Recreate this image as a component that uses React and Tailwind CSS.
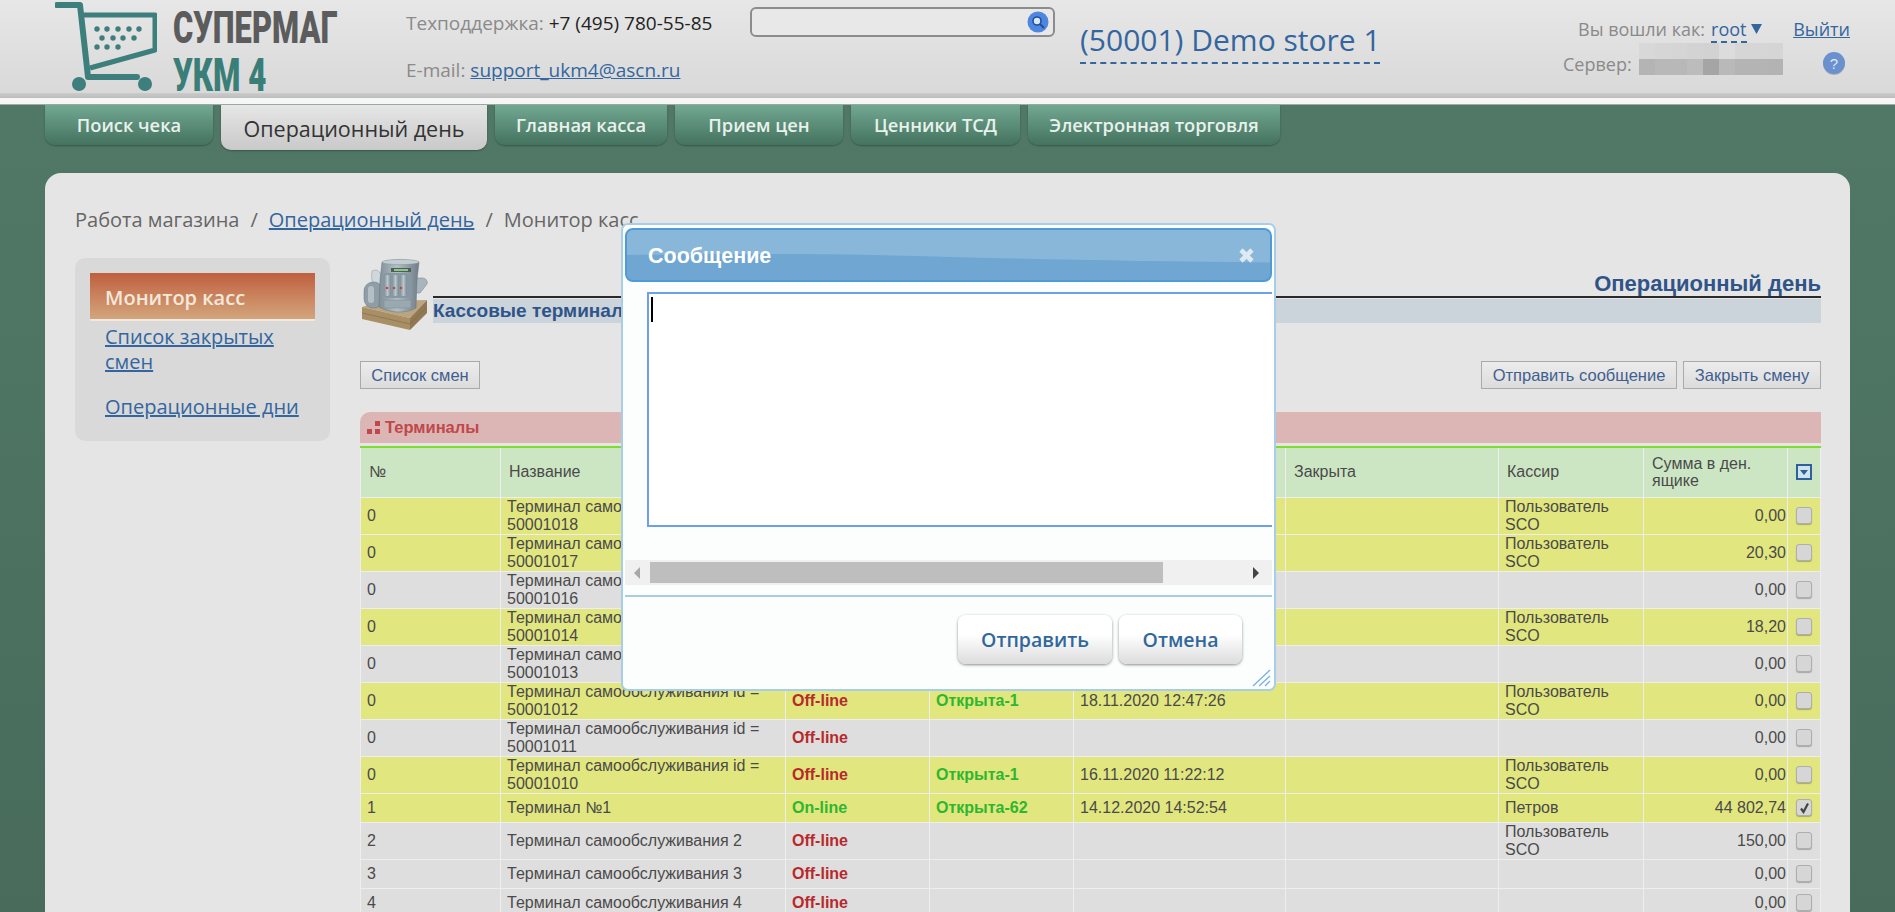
const tabs = [
    { label: "Поиск чека", width: "w-[168px]" },
    { label: "Операционный день", width: "w-[266px]", active: true },
    { label: "Главная касса", width: "w-[172px]" },
    { label: "Прием цен", width: "w-[168px]" },
    { label: "Ценники ТСД", width: "w-[169px]" },
    { label: "Электронная торговля", width: "w-[252px]" },
];

const SCO = "Терминал самообслуживания id =";

const rows = [
    { no: "0", name: SCO, id: "50001018", yellow: true, cashier: true, sum: "0,00" },
    { no: "0", name: SCO, id: "50001017", yellow: true, cashier: true, sum: "20,30" },
    { no: "0", name: SCO, id: "50001016", sum: "0,00" },
    { no: "0", name: SCO, id: "50001014", yellow: true, cashier: true, sum: "18,20" },
    { no: "0", name: SCO, id: "50001013", sum: "0,00" },
    { no: "0", name: SCO, id: "50001012", yellow: true, status: "Off-line", shift: "Открыта-1", opened: "18.11.2020 12:47:26", cashier: true, sum: "0,00" },
    { no: "0", name: SCO, id: "50001011", status: "Off-line", sum: "0,00" },
    { no: "0", name: SCO, id: "50001010", yellow: true, status: "Off-line", shift: "Открыта-1", opened: "16.11.2020 11:22:12", cashier: true, sum: "0,00" },
    { no: "1", name: "Терминал №1", yellow: true, short: true, status: "On-line", shift: "Открыта-62", opened: "14.12.2020 14:52:54", cashierName: "Петров", sum: "44 802,74", checked: true },
    { no: "2", name: "Терминал самообслуживания 2", status: "Off-line", cashier: true, sum: "150,00" },
    { no: "3", name: "Терминал самообслуживания 3", short: true, status: "Off-line", sum: "0,00" },
    { no: "4", name: "Терминал самообслуживания 4", short: true, status: "Off-line", sum: "0,00" },
];

const blurTop = ["bg-[#d8d8d8]", "bg-[#d6d6d6]", "bg-[#d5d5d5]", "bg-[#d3d3d3]", "bg-[#d2d2d2]", "bg-[#dcdcdc]", "bg-[#d6d6d6]", "bg-[#d6d6d6]", "bg-[#d5d5d5]"];
const blurBottom = ["bg-[#b4b4b4]", "bg-[#b8b8b8]", "bg-[#b8b8b8]", "bg-[#bcbcbc]", "bg-[#a5a5a5]", "bg-[#b9b9b9]", "bg-[#b4b4b4]", "bg-[#b4b4b4]", "bg-[#b3b3b3]"];

const CartLogo = () => (
    <svg width="102" height="92" viewBox="0 0 102 92" className="shrink-0">
        <g fill="none" stroke="#3c7f7c" strokeLinecap="round" strokeLinejoin="round">
            <path d="M2 4 H25 L33 76 H82" strokeWidth="6" />
            <path d="M27 14 H100 V49 L35 67" strokeWidth="5" strokeLinecap="butt" />
        </g>
        <g fill="#3c7f7c">
            <circle cx="24" cy="83" r="7" />
            <circle cx="90" cy="83" r="7" />
            {[42, 52, 63, 74, 84].map((x) => <circle key={x} cx={x} cy="28" r="2.7" />)}
            {[47, 58, 68, 79].map((x) => <circle key={x} cx={x} cy="37" r="2.7" />)}
            {[42, 52, 63].map((x) => <circle key={x} cx={x} cy="46" r="2.7" />)}
        </g>
    </svg>
);

const CashRegister = () => (
    <svg width="70" height="72" viewBox="0 0 70 72" className="shrink-0">
        <defs>
            <linearGradient id="metal" x1="0" x2="1" y1="0" y2="0">
                <stop offset="0" stopColor="#828f98" />
                <stop offset="0.45" stopColor="#b3bfc6" />
                <stop offset="1" stopColor="#707d87" />
            </linearGradient>
            <linearGradient id="drum" x1="0" x2="1" y1="0" y2="0">
                <stop offset="0" stopColor="#7f8f99" />
                <stop offset="0.5" stopColor="#b9c6cc" />
                <stop offset="1" stopColor="#7a8a94" />
            </linearGradient>
        </defs>
        {/* основание */}
        <path d="M2 49 L20 43 L67 42 L50 60 Z" fill="#bba57f" />
        <path d="M2 49 L50 60 L50 72 L2 61 Z" fill="#a88f66" />
        <path d="M50 60 L67 42 L67 55 L50 72 Z" fill="#8f7853" />
        <path d="M2 55 L50 66 L67 49" fill="none" stroke="#7d6844" strokeWidth="0.6" />
        {/* боковые части */}
        <path d="M12 13 C18 10 22 14 22 27 L14 29 C12 24 11 18 12 13 Z" fill="#cfd8dc" stroke="#8a979e" strokeWidth="0.5" />
        <rect x="4" y="24" width="19" height="26" rx="9" fill="#8e9da6" stroke="#66747d" strokeWidth="0.5" />
        <rect x="8" y="28" width="6" height="17" rx="3" fill="#b4c0c6" />
        <path d="M50 20 H62 C66 20 68 23 67 26 L60 35 H50 Z" fill="#a9b5bc" stroke="#707d87" strokeWidth="0.5" />
        {/* корпус */}
        <path d="M22 4 C30 1 50 1 59 4 L57 22 L56 50 C46 56 30 55 19 49 L20 22 Z" fill="url(#metal)" stroke="#66747d" strokeWidth="0.5" />
        <ellipse cx="40.5" cy="4" rx="18.5" ry="2.6" fill="#c3ced3" stroke="#7f8d96" strokeWidth="0.4" />
        <rect x="31" y="10" width="20" height="4" fill="#4d5f57" />
        <rect x="34" y="11" width="14" height="2" fill="#8fc58a" />
        <rect x="22" y="15" width="30" height="25" rx="5" fill="#8898a2" />
        {[24, 32, 40].map((x) => <rect key={x} x={x} y="17" width="7" height="21" rx="3" fill="url(#drum)" />)}
        {[27, 34, 41].map((x) => <circle key={x} cx={x} cy="30" r="1.3" fill="#c5473f" />)}
        <rect x="24" y="42" width="27" height="8" rx="1" fill="#9aa8b0" stroke="#76848d" strokeWidth="0.4" />
    </svg>
);

const Checkbox = ({ checked }) => (
    <div className="mx-auto flex h-[17px] w-4 items-center justify-center rounded-[3px] border border-[#aeaeae] bg-[#d6d6d6] shadow-[0_1px_1px_rgba(0,0,0,0.25)]">
        {checked && (
            <svg width="11" height="12" viewBox="0 0 11 12">
                <path d="M2 6.5 L4.5 10 L9 1.5" fill="none" stroke="#444" strokeWidth="2.2" />
            </svg>
        )}
    </div>
);

const Row = ({ row }) => {
    const bg = row.yellow ? "bg-[#e1e67f]" : "bg-[#dedede]";
    const cell = "border border-[#eeeeee] align-middle";
    return (
        <tr className={`${bg} ${row.short ? "h-[29px]" : "h-[37px]"}`}>
            <td className={`${cell} pl-[6px]`}>{row.no}</td>
            <td className={`${cell} pl-[6px]`}>
                {row.name}
                {row.id && <br />}
                {row.id}
            </td>
            <td className={`${cell} pl-[6px] font-bold ${row.status === "On-line" ? "text-[#2fb62f]" : "text-[#b8292c]"}`}>{row.status}</td>
            <td className={`${cell} pl-[6px] font-bold text-[#2fb62f]`}>{row.shift}</td>
            <td className={`${cell} pl-[6px]`}>{row.opened}</td>
            <td className={cell}></td>
            <td className={`${cell} pl-[6px]`}>
                {row.cashier && <>Пользователь<br />SCO</>}
                {row.cashierName}
            </td>
            <td className={`${cell} pr-[1px] text-right`}>{row.sum}</td>
            <td className={cell}><Checkbox checked={row.checked} /></td>
        </tr>
    );
};

const MessageModal = () => (
    <div className="absolute left-[621px] top-[223px] flex h-[468px] w-[655px] flex-col rounded-[7px] border-2 border-[#a8cde8] bg-[#fbfefd] px-[2px] pt-[3px]">
        {/* Заголовок */}
        <div className="relative flex h-[54px] items-center overflow-hidden rounded-[8px] border-2 border-[#4f9bd9] bg-[#6fa6d2] pl-[21px]">
            <svg className="absolute inset-0 h-full w-full" viewBox="0 0 645 54" preserveAspectRatio="none">
                <path d="M0 0 H645 V35 C500 34 350 30 250 27 C150 25 60 26 0 27 Z" fill="#89b7da" />
            </svg>
            <span className="relative top-[1px] font-['Liberation_Sans',sans-serif] text-[21.5px] font-bold text-white">Сообщение</span>
            <svg className="absolute right-[15px] top-[17px]" width="17" height="17" viewBox="0 0 17 17">
                <path d="M3 3 L14 14 M14 3 L3 14" stroke="#dfe9f2" strokeWidth="4.6" />
            </svg>
        </div>
        {/* Поле ввода */}
        <div className="ml-[22px] mt-[10px] h-[235px] border-y-2 border-l-2 border-[#6da0ec] bg-white pl-[2px] pt-[3px]">
            <div className="h-[25px] w-[2px] bg-black"></div>
        </div>
        {/* Полоса прокрутки */}
        <div className="mt-[33px] flex h-[25px] items-center bg-[#f0f0f0]">
            <svg className="ml-[8px] shrink-0" width="8" height="14" viewBox="0 0 8 14"><path d="M7 1 L1 7 L7 13 Z" fill="#a8a8a8" /></svg>
            <div className="ml-[9px] h-[21px] w-[513px] bg-[#bebebe]"></div>
            <svg className="ml-auto mr-[12px] shrink-0" width="8" height="14" viewBox="0 0 8 14"><path d="M1 1 L7 7 L1 13 Z" fill="#444" /></svg>
        </div>
        <div className="mt-[10px] h-[2px] bg-[#a8cde0]"></div>
        {/* Кнопки */}
        <div className="mt-[18px] flex justify-end gap-[7px] pr-[30px] font-['Open_Sans',sans-serif] text-[19.5px] font-semibold text-[#30689c]">
            <button className="h-[49px] w-[154px] rounded-[8px] bg-gradient-to-b from-white from-40% to-[#dcdcdc] shadow-[0_1px_3px_rgba(0,0,0,0.45)]">Отправить</button>
            <button className="h-[49px] w-[123px] rounded-[8px] bg-gradient-to-b from-white from-40% to-[#dcdcdc] shadow-[0_1px_3px_rgba(0,0,0,0.45)]">Отмена</button>
        </div>
        <svg className="absolute bottom-[2px] right-[3px]" width="19" height="18" viewBox="0 0 19 18">
            <path d="M1 17 L18 1 M7 17 L18 7 M13 17 L18 12" stroke="#7fb2e0" strokeWidth="1.4" />
        </svg>
    </div>
);

const App = () => {
    return (
        <div className="relative h-[912px] overflow-hidden bg-gradient-to-b from-[#527a68] to-[#486b5c] font-['Open_Sans',sans-serif]">
            {/* Шапка */}
            <div className="flex h-[93px] bg-gradient-to-b from-[#e7e7e7] to-[#d9d9d9] pl-[55px]">
                <div className="flex w-[351px] shrink-0 pt-[1px]">
                    <CartLogo />
                    <div className="ml-[16px] flex flex-col font-['Roboto',sans-serif] font-black">
                        <div className="mt-[6px] h-[42px] origin-left scale-x-[0.687] whitespace-nowrap text-[45px] leading-[42px] text-[#5c5c5c]">СУПЕРМАГ</div>
                        <div className="mt-[7px] h-[38px] origin-left scale-x-[0.68] whitespace-nowrap text-[46px] leading-[38px] text-[#3a7e78]">УКМ 4</div>
                    </div>
                </div>
                <div className="w-[344px] shrink-0 pt-[9px] text-[19px] text-[#8a8a8a]">
                    <div className="h-[28px] whitespace-nowrap leading-[28px]">Техподдержка: <span className="text-[#222]">+7 (495) 780-55-85</span></div>
                    <div className="mt-[19px] h-[28px] whitespace-nowrap leading-[28px]">E-mail: <a className="text-[#33669f] underline">support_ukm4@ascn.ru</a></div>
                </div>
                <div className="mt-[7px] flex h-[30px] w-[305px] shrink-0 items-center justify-end rounded-[6px] border-2 border-[#8c8c8c] bg-[#e8e8e8] pr-[4px]">
                    <svg width="22" height="22" viewBox="0 0 22 22">
                        <circle cx="11" cy="11" r="10.5" fill="#4f86e0" />
                        <circle cx="10" cy="10" r="4" fill="#dbe7f7" stroke="#1f4f9c" strokeWidth="1.6" />
                        <path d="M13 13 L17 17" stroke="#1f4f9c" strokeWidth="2" />
                    </svg>
                </div>
                <div className="ml-[25px] mt-[20px] h-[44px] w-[300px] shrink-0 whitespace-nowrap border-b-2 border-dashed border-[#33669f] text-center text-[30px] leading-[40px] text-[#33669f]">(50001) Demo store 1</div>
                <div className="ml-[183px] w-[287px] shrink-0 text-[18px] text-[#8a8a8a]">
                    <div className="mt-[15px] flex h-[28px] items-center pl-[15px] leading-[28px]">
                        <span className="shrink-0 whitespace-nowrap">Вы вошли как:</span>
                        <a className="ml-[6px] h-[27px] shrink-0 border-b-2 border-dashed border-[#33669f] leading-[26px] text-[#33669f]">root</a>
                        <svg className="ml-[4px] shrink-0" width="11" height="10" viewBox="0 0 11 10"><path d="M0 0 H11 L5.5 10 Z" fill="#33669f" /></svg>
                        <a className="ml-auto shrink-0 text-[#33669f] underline">Выйти</a>
                    </div>
                    <div className="flex h-[32px] items-center">
                        <span className="mt-[10px] w-[76px]">Сервер:</span>
                        <div className="flex h-[32px] flex-col">
                            <div className="flex">{blurTop.map((c, i) => <div key={i} className={`h-4 w-4 ${c}`}></div>)}</div>
                            <div className="flex">{blurBottom.map((c, i) => <div key={i} className={`h-4 w-4 ${c}`}></div>)}</div>
                        </div>
                        <svg className="ml-[39px] mt-[8px]" width="24" height="25" viewBox="0 0 24 25">
                            <circle cx="12" cy="13" r="11" fill="#53565a" opacity="0.3" />
                            <circle cx="12" cy="12" r="11" fill="#6b90ce" />
                            <text x="12" y="17.5" textAnchor="middle" fontSize="15" fontFamily="Liberation Sans" fill="#dfe8f6">?</text>
                        </svg>
                    </div>
                </div>
            </div>
            <div className="h-[5px] bg-gradient-to-b from-[#cbcbcb] to-[#bdbdbd]"></div>
            <div className="h-[7px] border-b border-[#9eaaa4] bg-[#f6f6f6]"></div>

            {/* Вкладки */}
            <div className="flex h-[68px] items-start gap-[8px] pl-[45px]">
                {tabs.map((tab) =>
                    tab.active ? (
                        <div key={tab.label} className={`${tab.width} flex h-[45px] items-center justify-center rounded-b-[10px] bg-gradient-to-b from-[#e6e6e6] to-[#c9c9c9] pt-[3px] text-[21.5px] text-[#333] shadow-[0_1px_2px_rgba(0,0,0,0.3)]`}>{tab.label}</div>
                    ) : (
                        <div key={tab.label} className={`${tab.width} flex h-[40px] items-center justify-center rounded-b-[10px] bg-gradient-to-b from-[#72a892] to-[#44735f] text-[18.3px] font-semibold text-[#e9f1ec] shadow-[0_1px_2px_rgba(0,0,0,0.3)]`}>{tab.label}</div>
                    )
                )}
            </div>

            {/* Основная панель */}
            <div className="mx-[45px] h-[800px] rounded-[16px] bg-[#e5e5e5] px-[30px] pt-[33px]">
                <div className="h-[28px] whitespace-nowrap text-[20px] leading-[28px] text-[#666]">
                    Работа магазина<span className="mx-[11px]">/</span><a className="text-[#33669f] underline">Операционный день</a><span className="mx-[11px]">/</span>Монитор касс
                </div>
                <div className="mt-[24px] flex items-start">
                    {/* Боковое меню */}
                    <div className="h-[183px] w-[255px] shrink-0 rounded-[10px] bg-[#d9d9d9] px-[15px] pt-[15px]">
                        <div className="h-[48px] border-b-2 border-[#f2e8de] bg-gradient-to-b from-[#bf5f3e] to-[#d2a57c] pl-[15px] pt-[11px] text-[20px] font-semibold leading-[28px] text-[#f4e8dc]">Монитор касс</div>
                        <div className="pl-[15px] text-[20px] leading-[25px] text-[#33669f]">
                            <a className="mt-[3px] block underline">Список закрытых смен</a>
                            <a className="mt-[20px] block underline">Операционные дни</a>
                        </div>
                    </div>

                    {/* Содержимое */}
                    <div className="ml-[30px] flex-1 font-['Liberation_Sans',sans-serif]">
                        <div className="flex h-[72px] items-start">
                            <CashRegister />
                            <div className="ml-[3px] mt-[10px] flex-1">
                                <div className="h-[28px] whitespace-nowrap text-right text-[22px] font-bold leading-[32px] text-[#2f5488]">Операционный день</div>
                                <div className="h-[2px] bg-[#2a2a2a]"></div>
                                <div className="mt-[1px] h-[24px] bg-[#cbd3db] text-[19px] font-bold leading-[24px] text-[#2f5488]">Кассовые терминалы</div>
                            </div>
                        </div>
                        <div className="mt-[31px] flex h-[28px] gap-[6px] text-[16.5px] text-[#3f5f8f]">
                            <button className="w-[120px] border border-[#aaaaaa] bg-gradient-to-b from-[#ececec] to-[#dcdcdc]">Список смен</button>
                            <button className="ml-auto w-[196px] border border-[#aaaaaa] bg-gradient-to-b from-[#ececec] to-[#dcdcdc]">Отправить сообщение</button>
                            <button className="w-[138px] border border-[#aaaaaa] bg-gradient-to-b from-[#ececec] to-[#dcdcdc]">Закрыть смену</button>
                        </div>

                        {/* Таблица терминалов */}
                        <div className="mt-[23px] flex h-[31px] items-center rounded-tl-[10px] bg-[#dcb6b5] pl-[7px] text-[16.5px] font-bold text-[#c0484a]">
                            <svg className="mr-[5px]" width="13" height="13" viewBox="0 0 13 13">
                                <rect x="0" y="8" width="5" height="5" fill="#c0484a" />
                                <rect x="8" y="8" width="5" height="5" fill="#c0484a" />
                                <rect x="8" y="0" width="5" height="5" fill="#c0484a" />
                            </svg>
                            Терминалы
                        </div>
                        <table className="mt-[3px] w-[1460px] table-fixed border-collapse text-[16px] leading-[17.6px] text-[#4a4a4a]">
                            <colgroup>
                                <col className="w-[140px]" />
                                <col className="w-[285px]" />
                                <col className="w-[144px]" />
                                <col className="w-[144px]" />
                                <col className="w-[212px]" />
                                <col className="w-[213px]" />
                                <col className="w-[145px]" />
                                <col className="w-[144px]" />
                                <col className="w-[33px]" />
                            </colgroup>
                            <thead>
                                <tr className="h-[50px] bg-[#cce6c4] text-left">
                                    <th className="border-x border-t-2 border-x-[#eeeeee] border-t-[#7fdd30] pl-[8px] font-normal">№</th>
                                    <th className="border-x border-t-2 border-x-[#eeeeee] border-t-[#7fdd30] pl-[8px] font-normal">Название</th>
                                    <th className="border-x border-t-2 border-x-[#eeeeee] border-t-[#7fdd30]"></th>
                                    <th className="border-x border-t-2 border-x-[#eeeeee] border-t-[#7fdd30]"></th>
                                    <th className="border-x border-t-2 border-x-[#eeeeee] border-t-[#7fdd30]"></th>
                                    <th className="border-x border-t-2 border-x-[#eeeeee] border-t-[#7fdd30] pl-[8px] font-normal">Закрыта</th>
                                    <th className="border-x border-t-2 border-x-[#eeeeee] border-t-[#7fdd30] pl-[8px] font-normal">Кассир</th>
                                    <th className="border-x border-t-2 border-x-[#eeeeee] border-t-[#7fdd30] pl-[8px] font-normal">Сумма в ден. ящике</th>
                                    <th className="border-x border-t-2 border-x-[#eeeeee] border-t-[#7fdd30]">
                                        <div className="mx-auto flex h-4 w-4 items-center justify-center border-2 border-[#2f5f9f] bg-[#cfe4e8]">
                                            <svg width="8" height="5" viewBox="0 0 8 5"><path d="M0 0 H8 L4 5 Z" fill="#2f5f9f" /></svg>
                                        </div>
                                    </th>
                                </tr>
                            </thead>
                            <tbody>
                                {rows.map((row, i) => <Row key={i} row={row} />)}
                            </tbody>
                        </table>
                    </div>
                </div>
            </div>

            <MessageModal />
        </div>
    );
};

export default App;
